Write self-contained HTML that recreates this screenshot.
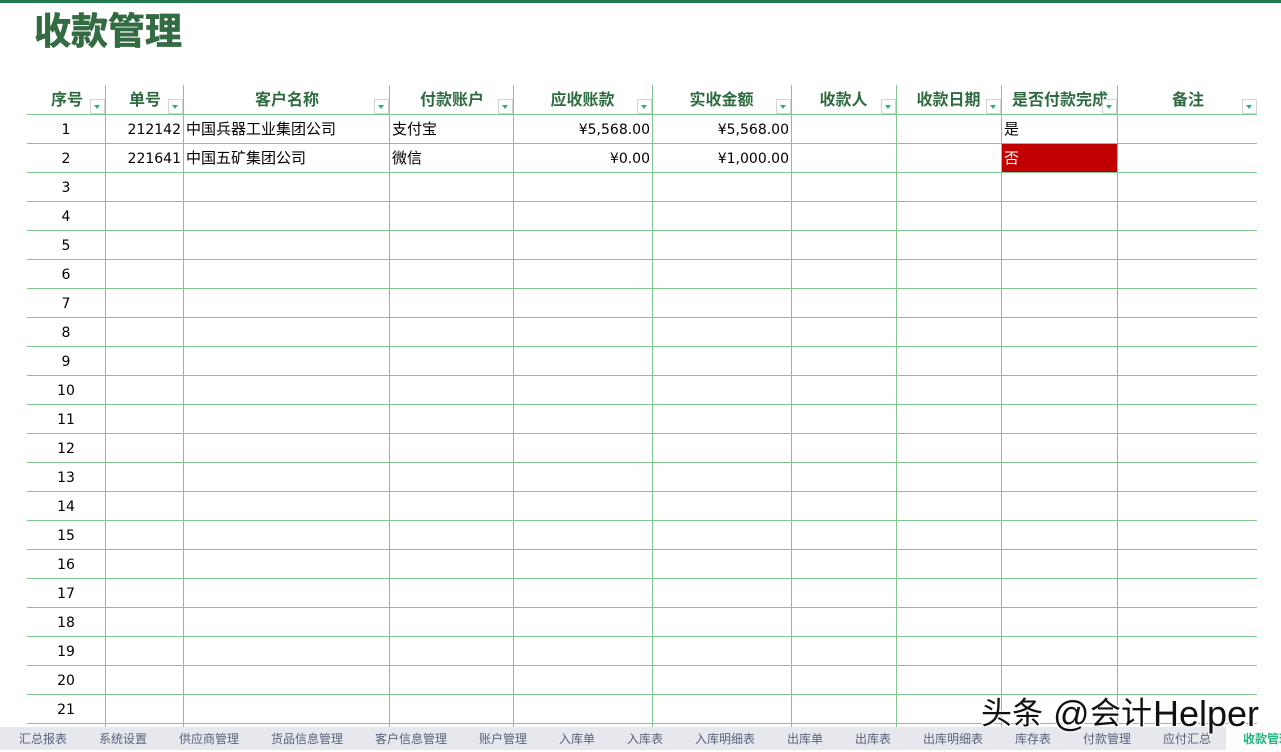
<!DOCTYPE html>
<html lang="zh">
<head>
<meta charset="utf-8">
<title>收款管理</title>
<style>
html,body{margin:0;padding:0;background:#fff}
body{position:relative;width:1281px;height:752px;overflow:hidden;font-family:"DejaVu Sans","Noto Sans CJK SC",sans-serif;color:#000}
.top{position:absolute;left:0;top:0;width:1281px;height:3px;background:#1f7a4d}
.title{position:absolute;left:34px;top:3px;font:bold 37px/50px "Noto Sans CJK SC",sans-serif;color:#336b42;white-space:nowrap;-webkit-text-stroke:.7px #336b42}
.hl{position:absolute;left:27px;top:114px;width:1230px;height:610px;background:repeating-linear-gradient(to bottom,#7fc68f 0,#7fc68f 1px,transparent 1px,transparent 29px)}
.v{position:absolute;top:85px;width:1px;height:642px;background:#7fc68f}
.h{position:absolute;top:85px;height:27px;font:bold 16px/26px "Noto Sans CJK SC",sans-serif;color:#2f6b40;text-align:center;white-space:nowrap;overflow:hidden}
.f{position:absolute;top:99px;width:13px;height:13px;border:1px solid #d4d4d4;background:#fff}
.f:after{content:"";position:absolute;left:3px;top:5px;border-left:3.5px solid transparent;border-right:3.5px solid transparent;border-top:4px solid #27b277}
.n{position:absolute;left:27px;width:78px;text-align:center;font-size:14px;line-height:31px;white-space:nowrap}
.c{position:absolute;font-size:14px;line-height:31px;white-space:nowrap;font-family:"DejaVu Sans","Noto Sans CJK SC",sans-serif}
.c.cj{font-family:"Noto Sans CJK SC",sans-serif;font-size:15px;line-height:27px}
.r{text-align:right}
.red{position:absolute;left:1002px;top:144px;width:115px;height:28px;background:#c00000}
.bar{position:absolute;left:0;top:727px;width:1281px;height:23px;background:#e6e8ee}
.active{position:absolute;left:1226px;top:727px;width:55px;height:23px;background:#fff;overflow:hidden}
.tab{position:absolute;top:727px;font:12px/23px "Noto Sans CJK SC",sans-serif;color:#59627a;white-space:nowrap}
.wm{position:absolute;top:692px;line-height:44px;font-family:"Liberation Sans","Noto Sans CJK SC",sans-serif;color:#111;white-space:nowrap;text-shadow:1px 1px 0 #fff,-1px -1px 0 #fff,1px -1px 0 #fff,-1px 1px 0 #fff}
</style>
</head>
<body>
<div class="top"></div>
<div class="title">收款管理</div>

<div class="red"></div>
<div class="hl"></div>
<div class="v" style="left:105px"></div>
<div class="v" style="left:183px"></div>
<div class="v" style="left:389px"></div>
<div class="v" style="left:513px"></div>
<div class="v" style="left:652px"></div>
<div class="v" style="left:791px"></div>
<div class="v" style="left:896px"></div>
<div class="v" style="left:1001px"></div>
<div class="v" style="left:1117px"></div>

<div class="h" style="left:27px;width:80px">序号</div>
<div class="h" style="left:106px;width:78px">单号</div>
<div class="h" style="left:184px;width:206px">客户名称</div>
<div class="h" style="left:390px;width:124px">付款账户</div>
<div class="h" style="left:513px;width:139px">应收账款</div>
<div class="h" style="left:652px;width:139px">实收金额</div>
<div class="h" style="left:791px;width:105px">收款人</div>
<div class="h" style="left:896px;width:105px">收款日期</div>
<div class="h" style="left:1012px;width:96px;text-align:left">是否付款完成</div>
<div class="h" style="left:1118px;width:140px">备注</div>

<div class="f" style="left:90px"></div>
<div class="f" style="left:168px"></div>
<div class="f" style="left:374px"></div>
<div class="f" style="left:498px"></div>
<div class="f" style="left:637px"></div>
<div class="f" style="left:776px"></div>
<div class="f" style="left:881px"></div>
<div class="f" style="left:986px"></div>
<div class="f" style="left:1102px"></div>
<div class="f" style="left:1242px"></div>

<div class="n" style="top:115px">1</div>
<div class="n" style="top:144px">2</div>
<div class="n" style="top:173px">3</div>
<div class="n" style="top:202px">4</div>
<div class="n" style="top:231px">5</div>
<div class="n" style="top:260px">6</div>
<div class="n" style="top:289px">7</div>
<div class="n" style="top:318px">8</div>
<div class="n" style="top:347px">9</div>
<div class="n" style="top:376px">10</div>
<div class="n" style="top:405px">11</div>
<div class="n" style="top:434px">12</div>
<div class="n" style="top:463px">13</div>
<div class="n" style="top:492px">14</div>
<div class="n" style="top:521px">15</div>
<div class="n" style="top:550px">16</div>
<div class="n" style="top:579px">17</div>
<div class="n" style="top:608px">18</div>
<div class="n" style="top:637px">19</div>
<div class="n" style="top:666px">20</div>
<div class="n" style="top:695px">21</div>

<div class="c r" style="left:106px;width:75px;top:115px">212142</div>
<div class="c r" style="left:106px;width:75px;top:144px">221641</div>
<div class="c cj" style="left:186px;top:115px">中国兵器工业集团公司</div>
<div class="c cj" style="left:186px;top:144px">中国五矿集团公司</div>
<div class="c cj" style="left:392px;top:115px">支付宝</div>
<div class="c cj" style="left:392px;top:144px">微信</div>
<div class="c r" style="left:514px;width:136px;top:115px">¥5,568.00</div>
<div class="c r" style="left:514px;width:136px;top:144px">¥0.00</div>
<div class="c r" style="left:653px;width:136px;top:115px">¥5,568.00</div>
<div class="c r" style="left:653px;width:136px;top:144px">¥1,000.00</div>
<div class="c cj" style="left:1004px;top:115px">是</div>
<div class="c cj" style="left:1004px;top:144px;color:#fff">否</div>

<div class="bar"></div>
<div class="active"></div>
<div class="tab" style="left:19px">汇总报表</div>
<div class="tab" style="left:99px">系统设置</div>
<div class="tab" style="left:179px">供应商管理</div>
<div class="tab" style="left:271px">货品信息管理</div>
<div class="tab" style="left:375px">客户信息管理</div>
<div class="tab" style="left:479px">账户管理</div>
<div class="tab" style="left:559px">入库单</div>
<div class="tab" style="left:627px">入库表</div>
<div class="tab" style="left:695px">入库明细表</div>
<div class="tab" style="left:787px">出库单</div>
<div class="tab" style="left:855px">出库表</div>
<div class="tab" style="left:923px">出库明细表</div>
<div class="tab" style="left:1015px">库存表</div>
<div class="tab" style="left:1083px">付款管理</div>
<div class="tab" style="left:1163px">应付汇总</div>
<div class="tab" style="left:1243px;width:38px;overflow:hidden;color:#1fb77a;font-weight:bold">收款管理</div>

<div class="wm" style="left:981px;font-size:31px">头条</div>
<div class="wm" style="left:1053px;font-size:36px">@</div>
<div class="wm" style="left:1090px;font-size:31px">会计</div>
<div class="wm" style="left:1153px;font-size:36px">Helper</div>
</body>
</html>
